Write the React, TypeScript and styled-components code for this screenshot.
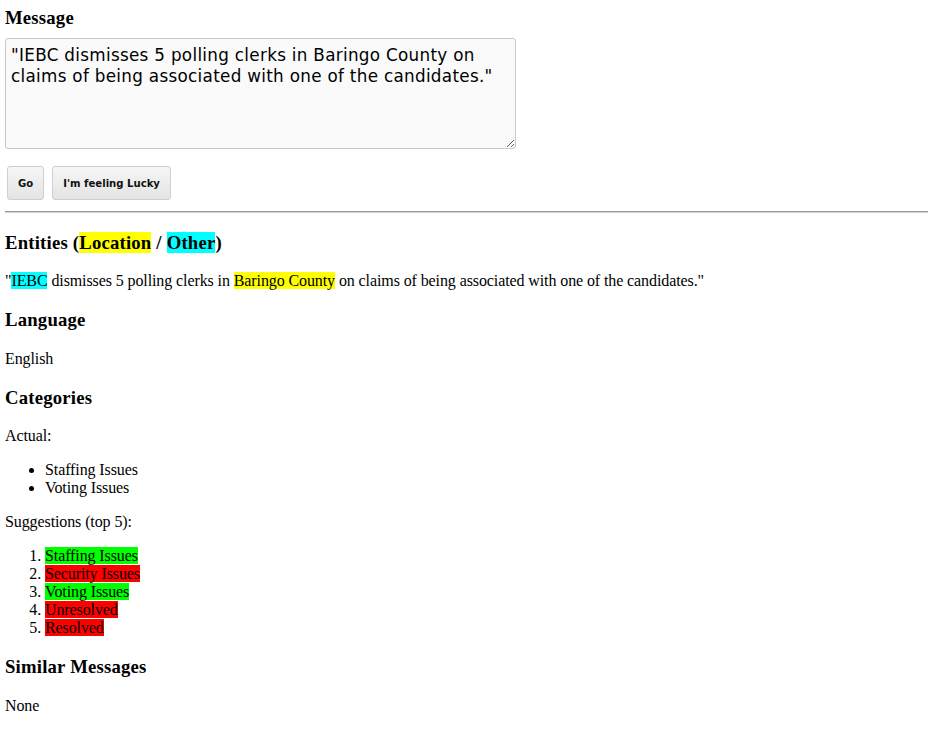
import React from "react";
import styled, { createGlobalStyle } from "styled-components";

const Global = createGlobalStyle`
  html, body { background: #fff; }
  body {
    margin: 7px 0 5px 5px;
    font-family: "Liberation Serif", "Times New Roman", serif;
    font-size: 16px;
    letter-spacing: -0.1px;
    color: #000;
  }
`;

const Heading = styled.h3<{ $top?: boolean }>`
  font-family: "Liberation Serif", "Times New Roman", serif;
  font-size: 18.72px;
  font-weight: bold;
  letter-spacing: 0.2px;
  margin: ${(p) => (p.$top ? "0 0 9px" : "18.72px 0")};
`;

const MessageBox = styled.textarea`
  display: block;
  box-sizing: border-box;
  width: 511px;
  height: 111px;
  padding: 6px 5px 4px;
  margin: 0;
  background: #fafafa;
  border: 1px solid #c8c8c8;
  border-radius: 3px;
  font-family: "DejaVu Sans", Verdana, sans-serif;
  font-size: 16.8px;
  line-height: 21px;
  letter-spacing: 0.3px;
  color: #000;
  resize: vertical;
`;

const ButtonRow = styled.div`
  display: flex;
  gap: 8px;
  margin: 17px 0 0 2px;
`;

const Button = styled.button`
  height: 34px;
  padding: 0 10px;
  border: 1px solid #cfcfcf;
  border-radius: 3px;
  background: linear-gradient(#f6f6f6, #e4e4e4);
  font-family: "DejaVu Sans", Verdana, sans-serif;
  font-size: 10.1px;
  font-weight: bold;
  letter-spacing: 0;
  color: #111;
  cursor: pointer;
`;

const Rule = styled.hr`
  margin: 11px 0 0;
  height: 0;
  border: none;
  border-top: 1px solid #9a9a9a;
  border-bottom: 1px solid #d6d6d6;
`;

const Para = styled.p`
  margin: 16px 0;
`;

const Mark = styled.span<{ $c: string }>`
  background: ${(p) => p.$c};
`;

const BulletList = styled.ul`
  margin: 16px 0;
  padding-left: 40px;
`;

const NumberList = styled.ol`
  margin: 16px 0;
  padding-left: 40px;
`;

const YELLOW = "#ffff00";
const CYAN = "#00ffff";
const GREEN = "#00ff00";
const RED = "#ff0000";

const suggestions: [string, boolean][] = [
  ["Staffing Issues", true],
  ["Security Issues", false],
  ["Voting Issues", true],
  ["Unresolved", false],
  ["Resolved", false],
];

export default function App() {
  return (
    <>
      <Global />
      <Heading $top>Message</Heading>
      <MessageBox
        defaultValue={
          '"IEBC dismisses 5 polling clerks in Baringo County on claims of being associated with one of the candidates."'
        }
      />
      <ButtonRow>
        <Button>Go</Button>
        <Button>I'm feeling Lucky</Button>
      </ButtonRow>
      <Rule />
      <Heading>
        Entities (<Mark $c={YELLOW}>Location</Mark> / <Mark $c={CYAN}>Other</Mark>)
      </Heading>
      <Para>
        "<Mark $c={CYAN}>IEBC</Mark> dismisses 5 polling clerks in{" "}
        <Mark $c={YELLOW}>Baringo County</Mark> on claims of being associated with one of the
        candidates."
      </Para>
      <Heading>Language</Heading>
      <Para>English</Para>
      <Heading>Categories</Heading>
      <Para>Actual:</Para>
      <BulletList>
        <li>Staffing Issues</li>
        <li>Voting Issues</li>
      </BulletList>
      <Para>Suggestions (top 5):</Para>
      <NumberList>
        {suggestions.map(([name, ok]) => (
          <li key={name}>
            <Mark $c={ok ? GREEN : RED}>{name}</Mark>
          </li>
        ))}
      </NumberList>
      <Heading>Similar Messages</Heading>
      <Para>None</Para>
    </>
  );
}
